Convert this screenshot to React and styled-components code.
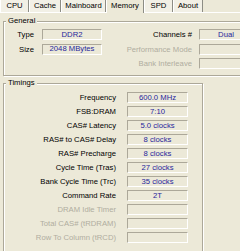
import React from "react";
import styled, { createGlobalStyle } from "styled-components";

const Global = createGlobalStyle`
  html, body { margin: 0; padding: 0; background: #ECE9D8; overflow: hidden; }
  body { font-family: "Liberation Sans", Arial, sans-serif; }
`;

const Window = styled.div`
  width: 240px;
  height: 251px;
  overflow: hidden;
  background: #ECE9D8;
  font-size: 7.7px;
  color: #000;
`;

const TabBar = styled.div`
  display: flex;
  align-items: flex-start;
  height: 12px;
  width: 320px;
`;

const Tab = styled.div`
  position: relative;
  z-index: ${(p) => (p.$active ? 2 : 1)};
  box-sizing: border-box;
  width: ${(p) => p.$w}px;
  height: ${(p) => (p.$active ? 13 : 12)}px;
  border-left: 1px solid #fff;
  border-right: 1px solid #8d8d85;
  background: ${(p) => (p.$active ? "#ECE9D8" : "#F2F0E6")};
  display: flex;
  align-items: flex-start;
  justify-content: center;
  padding-top: 1px;
  line-height: 9px;
  white-space: nowrap;
`;

const Panel = styled.div`
  border-top: 1px solid #fff;
  padding: 3px 0 0 3px;
  width: 330px;
`;

const Group = styled.fieldset`
  margin: ${(p) => p.$mt || 0}px 0 0 0;
  padding: ${(p) => p.$pt}px 0 ${(p) => p.$pb}px 0;
  width: ${(p) => p.$w}px;
  box-sizing: border-box;
  min-width: 0;
  border: 1px solid #ACA899;
  box-shadow: inset 1px 1px 0 #fff, 1px 1px 0 #fff;
`;

const Legend = styled.legend`
  font-size: 7.7px;
  line-height: 10px;
  padding: 0 2px;
  margin-left: 2px;
  background: #ECE9D8;
`;

const GeneralGrid = styled.div`
  display: grid;
  grid-template-columns: 38px 60px 97px 54px;
  grid-auto-rows: 11px;
  row-gap: 3.5px;
`;

const TimingsGrid = styled.div`
  display: grid;
  grid-template-columns: 123px 61px;
  grid-auto-rows: 11px;
  row-gap: 3px;
`;

const Label = styled.div`
  text-align: right;
  padding-right: ${(p) => p.$pr}px;
  line-height: 11px;
  white-space: nowrap;
  color: ${(p) => (p.$disabled ? "#B0AD9F" : "#000")};
`;

const Field = styled.div`
  box-sizing: border-box;
  height: 11px;
  border-top: 1px solid #ACA899;
  border-left: 1px solid #ACA899;
  border-bottom: 1px solid #fff;
  border-right: 1px solid #fff;
  color: #26269C;
  display: flex;
  align-items: center;
  justify-content: center;
  line-height: 1;
  white-space: nowrap;
`;

const Empty = styled.div``;

const tabs = [
  { name: "CPU", w: 29 },
  { name: "Cache", w: 32 },
  { name: "Mainboard", w: 45 },
  { name: "Memory", w: 38, active: true },
  { name: "SPD", w: 29 },
  { name: "About", w: 30 },
];

const timings = [
  ["Frequency", "600.0 MHz"],
  ["FSB:DRAM", "7:10"],
  ["CAS# Latency", "5.0 clocks"],
  ["RAS# to CAS# Delay", "8 clocks"],
  ["RAS# Precharge", "8 clocks"],
  ["Cycle Time (Tras)", "27 clocks"],
  ["Bank Cycle Time (Trc)", "35 clocks"],
  ["Command Rate", "2T"],
  ["DRAM Idle Timer", "", true],
  ["Total CAS# (tRDRAM)", "", true],
  ["Row To Column (tRCD)", "", true],
];

export default function App() {
  return (
    <Window>
      <Global />
      <TabBar>
        {tabs.map((t) => (
          <Tab key={t.name} $w={t.w} $active={t.active}>
            {t.name}
          </Tab>
        ))}
      </TabBar>
      <Panel>
        <Group $w={320} $pt={3} $pb={6}>
          <Legend>General</Legend>
          <GeneralGrid>
            <Label $pr={8}>Type</Label>
            <Field>DDR2</Field>
            <Label $pr={7}>Channels #</Label>
            <Field>Dual</Field>

            <Label $pr={8}>Size</Label>
            <Field>2048 MBytes</Field>
            <Label $pr={7} $disabled>Performance Mode</Label>
            <Field />

            <Empty />
            <Empty />
            <Label $pr={7} $disabled>Bank Interleave</Label>
            <Field />
          </GeneralGrid>
        </Group>
        <Group $w={200} $mt={2} $pt={4} $pb={10}>
          <Legend>Timings</Legend>
          <TimingsGrid>
            {timings.map(([label, value, disabled]) => (
              <React.Fragment key={label}>
                <Label $pr={11} $disabled={disabled}>{label}</Label>
                <Field>{value}</Field>
              </React.Fragment>
            ))}
          </TimingsGrid>
        </Group>
      </Panel>
    </Window>
  );
}
